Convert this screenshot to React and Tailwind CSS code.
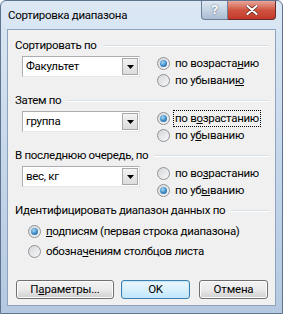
import React from "react";

const font = { fontFamily: 'Roboto, "Liberation Sans", sans-serif' };

function Radio({ checked, children, focused }) {
  return (
    <div className="flex items-center h-[17px]">
      <span className="relative w-[13px] h-[13px] rounded-full border border-[#8f9296] bg-gradient-to-br from-[#d4d6d9] to-[#f8f8f8] flex items-center justify-center shrink-0">
        {checked && (
          <span className="w-[7px] h-[7px] rounded-full bg-[radial-gradient(circle_at_40%_35%,#a6dcf7_0%,#3d87c4_55%,#1b4f86_100%)]" />
        )}
      </span>
      <span
        className={`ml-[3px] px-[1px] leading-[15px] ${
          focused ? "border border-dotted border-black" : "border border-transparent"
        }`}
      >
        {children}
      </span>
    </div>
  );
}

function Combo({ value }) {
  return (
    <div className="w-[118px] h-[21px] bg-white border border-[#abadb3] border-r-[#dbdfe6] border-b-[#e3e9ef] flex items-center">
      <span className="flex-1 pl-[3px] leading-[15px]">{value}</span>
      <span className="w-[16px] h-[17px] mr-[1px] border border-[#a8a8a8] bg-gradient-to-b from-[#f3f3f3] to-[#dcdcdc] flex items-center justify-center">
        <svg width="7" height="4" viewBox="0 0 7 4">
          <path d="M0 0h7L3.5 4z" fill="#000" />
        </svg>
      </span>
    </div>
  );
}

function GroupLabel({ children }) {
  return (
    <div className="flex items-center h-[15px] pl-[7px] pr-[6px]">
      <span className="leading-[15px] whitespace-nowrap">{children}</span>
      <span className="flex-1 ml-[6px] h-[2px] border-t border-[#d5dfe5] border-b border-b-white" />
    </div>
  );
}

function SortGroup({ label, value, asc, focusAsc, underlines }) {
  return (
    <div>
      <GroupLabel>{label}</GroupLabel>
      <div className="flex mt-[2px]">
        <div className="ml-[14px] mt-[1px]">
          <Combo value={value} />
        </div>
        <div className="ml-[17px]">
          <Radio checked={asc} focused={focusAsc}>
            {underlines[0]}
          </Radio>
          <Radio checked={!asc}>{underlines[1]}</Radio>
        </div>
      </div>
    </div>
  );
}

function Btn({ children, primary }) {
  return (
    <button
      className={`h-[19px] rounded-[3px] border leading-[15px] text-[11.5px] tracking-[-0.2px] ${
        primary
          ? "border-[#3c7fb1] bg-gradient-to-b from-[#eaf6fd] via-[#d9f0fc] to-[#bee6fd] shadow-[inset_0_0_0_1px_#c6e8fa]"
          : "border-[#707070] bg-gradient-to-b from-[#f2f2f2] via-[#ebebeb] to-[#cfcfcf] shadow-[inset_0_0_0_1px_#fcfcfc]"
      }`}
      style={font}
    >
      {children}
    </button>
  );
}

export default function App() {
  return (
    <div
      className="w-[283px] h-[314px] rounded-t-[6px] border border-[#5d7390] bg-gradient-to-b from-[#dce8f4] via-[#c6d7ea] to-[#b4c9e0] text-[11.5px] tracking-[-0.3px] text-black flex flex-col"
      style={font}
    >
      {/* title bar */}
      <div className="h-[28px] flex items-start">
        <span className="ml-[7px] mt-[7px] leading-[15px]">Сортировка диапазона</span>
        <div className="ml-auto mr-[6px] flex">
          <div className="w-[27px] h-[19px] rounded-bl-[4px] border border-t-0 border-[#6d7f96] bg-gradient-to-b from-[#dfe8f2] via-[#c5d3e3] to-[#a9bcd2] flex items-center justify-center text-[13px] font-bold text-white [text-shadow:0_0_2px_#45556a]">
            ?
          </div>
          <div className="w-[48px] h-[19px] rounded-br-[4px] border border-t-0 border-l-0 border-[#6b2a2a] bg-gradient-to-b from-[#e8a59a] via-[#d0543f] to-[#c2382a] flex items-center justify-center">
            <svg width="12" height="10" viewBox="0 0 12 10">
              <path d="M1.5 1l9 8M10.5 1l-9 8" stroke="#5a1e1a" strokeWidth="3.4" strokeLinecap="round" />
              <path d="M1.5 1l9 8M10.5 1l-9 8" stroke="#fff" strokeWidth="2.2" strokeLinecap="round" />
            </svg>
          </div>
        </div>
      </div>

      {/* client area */}
      <div className="mx-[6px] h-[277px] border border-[#8ea3bc] bg-[#f0f0f0] pt-[8px]">
        <SortGroup
          label="Сортировать по"
          value="Факультет"
          asc
          underlines={[
            <>по возраста<u>н</u>ию</>,
            <>по убывани<u>ю</u></>,
          ]}
        />
        <div className="mt-[4px]">
          <SortGroup
            label="Затем по"
            value="группа"
            asc
            focusAsc
            underlines={[
              <>по в<u>о</u>зрастанию</>,
              <>по у<u>б</u>ыванию</>,
            ]}
          />
        </div>
        <div className="mt-[4px]">
          <SortGroup
            label="В последнюю очередь, по"
            value="вес, кг"
            asc={false}
            underlines={[
              <>по во<u>з</u>растанию</>,
              <>по уб<u>ы</u>ванию</>,
            ]}
          />
        </div>
        <div className="mt-[4px]">
          <GroupLabel>Идентифицировать диапазон данных по</GroupLabel>
          <div className="ml-[20px] mt-[5px] flex flex-col gap-[3px]">
            <Radio checked>
              <u>п</u>одписям (первая строка диапазона)
            </Radio>
            <Radio>
              обозна<u>ч</u>ениям столбцов листа
            </Radio>
          </div>
        </div>
        <div className="flex mt-[20px] ml-[8px]">
          <div className="w-[96px]">
            <Btn>
              <span className="block w-[96px]">
                П<u>а</u>раметры...
              </span>
            </Btn>
          </div>
          <div className="ml-[9px]">
            <Btn primary>
              <span className="block w-[67px]">OK</span>
            </Btn>
          </div>
          <div className="ml-[9px]">
            <Btn>
              <span className="block w-[67px]">Отмена</span>
            </Btn>
          </div>
        </div>
      </div>
    </div>
  );
}
